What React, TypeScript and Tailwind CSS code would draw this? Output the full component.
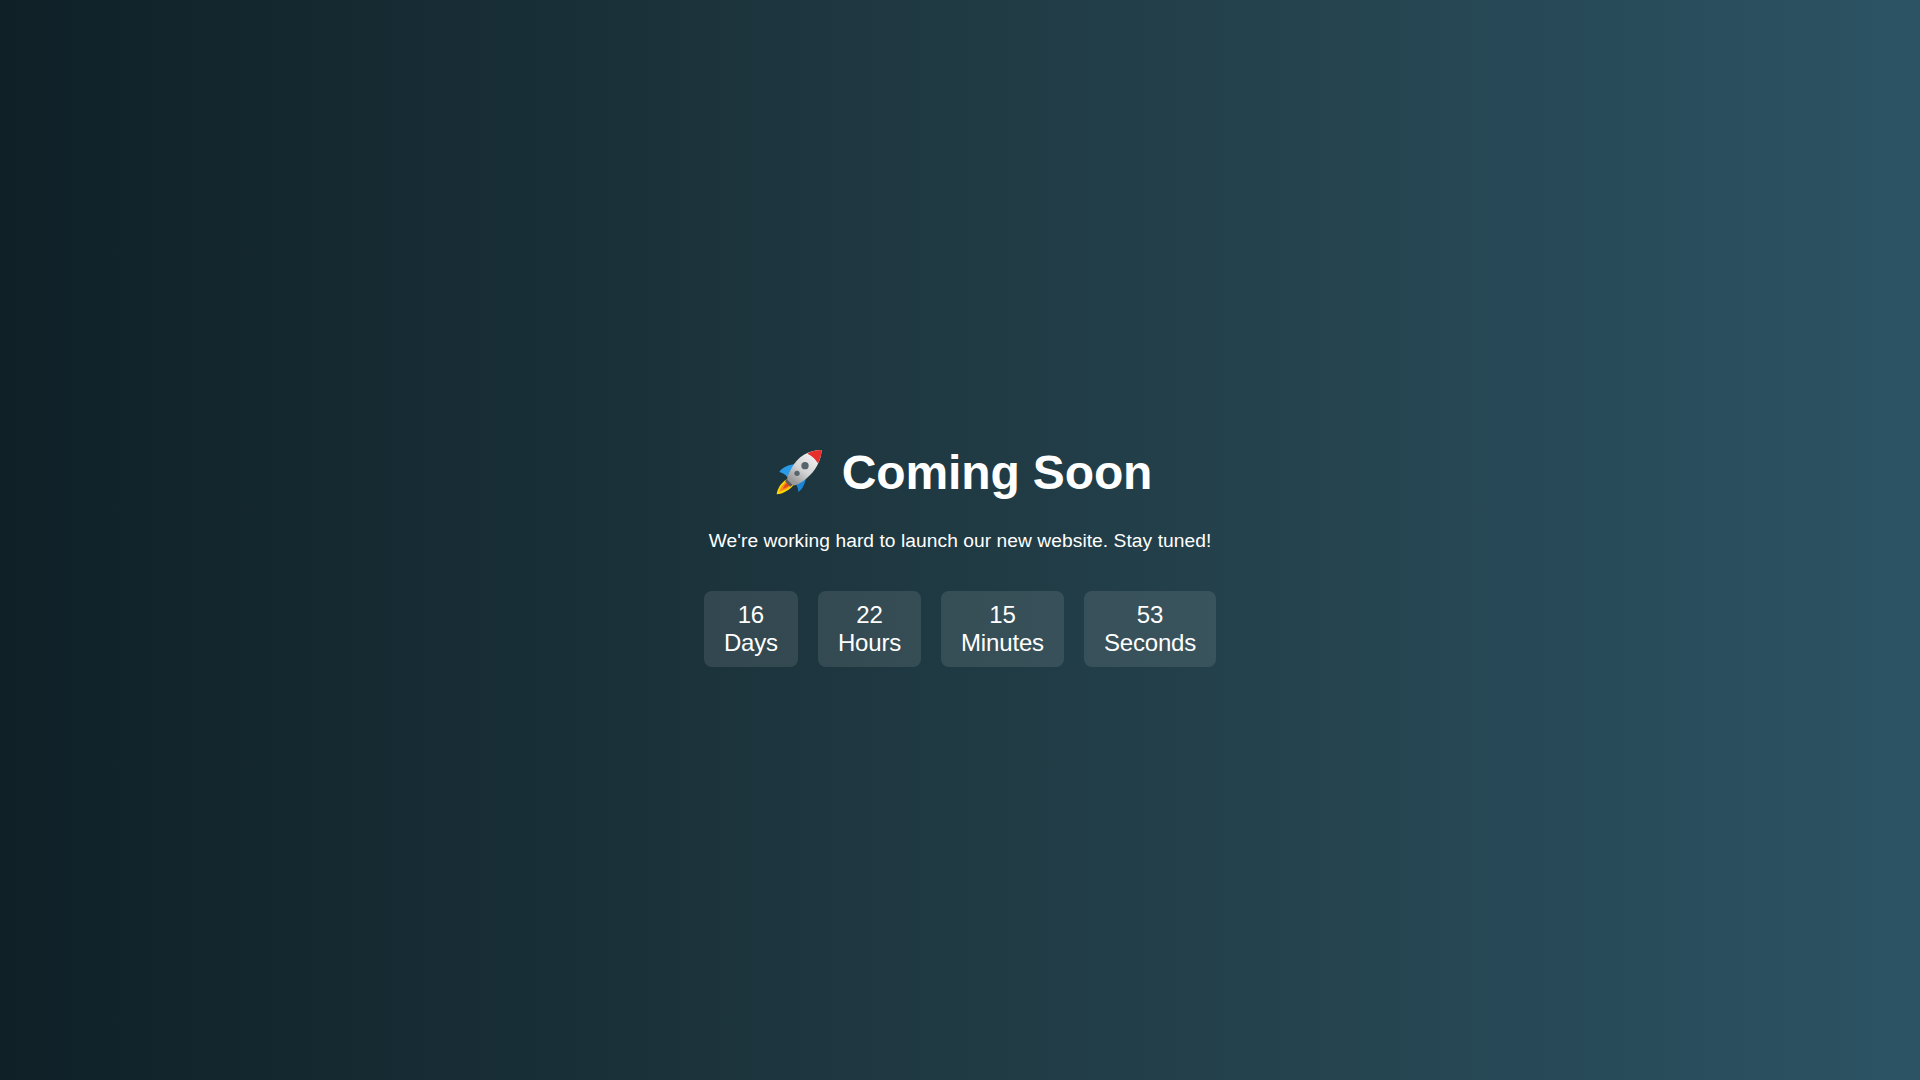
const units = [
  { value: "16", label: "Days" },
  { value: "22", label: "Hours" },
  { value: "15", label: "Minutes" },
  { value: "53", label: "Seconds" },
];

function Rocket() {
  return (
    <svg width="60" height="55" viewBox="9 15 180 165" className="shrink-0">
      <defs>
        <linearGradient id="hull" x1="0.8" y1="0.1" x2="0.2" y2="0.9">
          <stop offset="0" stopColor="#f4f4f4" />
          <stop offset="0.6" stopColor="#d2d2d2" />
          <stop offset="1" stopColor="#9a9a9a" />
        </linearGradient>
      </defs>
      <path d="M66 118C48 128 37 146 35 163C54 161 74 150 86 134Z" fill="#ffd400" />
      <path d="M68 122C54 132 45 144 43 155C56 152 72 144 82 132Z" fill="#f58a1f" />
      <path d="M70 126C62 132 56 139 54 146C62 144 72 138 78 132Z" fill="#e2481f" />
      <path d="M43 96C52 83 68 75 90 73L68 112C60 103 52 98 43 96Z" fill="#2a9be8" />
      <path d="M100 156C113 147 122 130 125 102L90 128C96 136 100 146 100 156Z" fill="#1c86d6" />
      <path d="M66 116L60 124L76 140L86 132Z" fill="#5a5e61" />
      <path d="M170 30C130 30 98 50 80 84C70 102 64 114 68 120L84 136C92 138 110 128 126 114C150 94 168 64 170 30Z" fill="url(#hull)" />
      <path d="M170 30C152 30 138 34 127 41C140 46 152 58 159 70C165 58 169 46 170 30Z" fill="#e5302b" />
      <circle cx="120" cy="77" r="11" fill="#56646b" />
      <circle cx="96" cy="100" r="8" fill="#56646b" />
    </svg>
  );
}

export default function App() {
  return (
    <main className="flex h-screen items-center justify-center bg-gradient-to-r from-[#0f2027] via-[#203a43] to-[#2c5364] text-center font-['Liberation_Sans',Arial,sans-serif] text-white">
      <div>
        <h1 className="mt-8 mb-[30px] flex items-center justify-center gap-[14px] text-5xl leading-[55px] font-bold tracking-[-0.13px]">
          <Rocket />
          <span>Coming Soon</span>
        </h1>
        <p className="text-[19.2px] leading-[22px] tracking-[0.06px]">We're working hard to launch our new website. Stay tuned!</p>
        <div className="mt-[39px] flex justify-center gap-5">
          {units.map((unit) => (
            <div key={unit.label} className="rounded-lg bg-white/10 px-5 py-2.5 text-2xl leading-[28px] tracking-[-0.17px]">
              <div>{unit.value}</div>
              <div>{unit.label}</div>
            </div>
          ))}
        </div>
      </div>
    </main>
  );
}
